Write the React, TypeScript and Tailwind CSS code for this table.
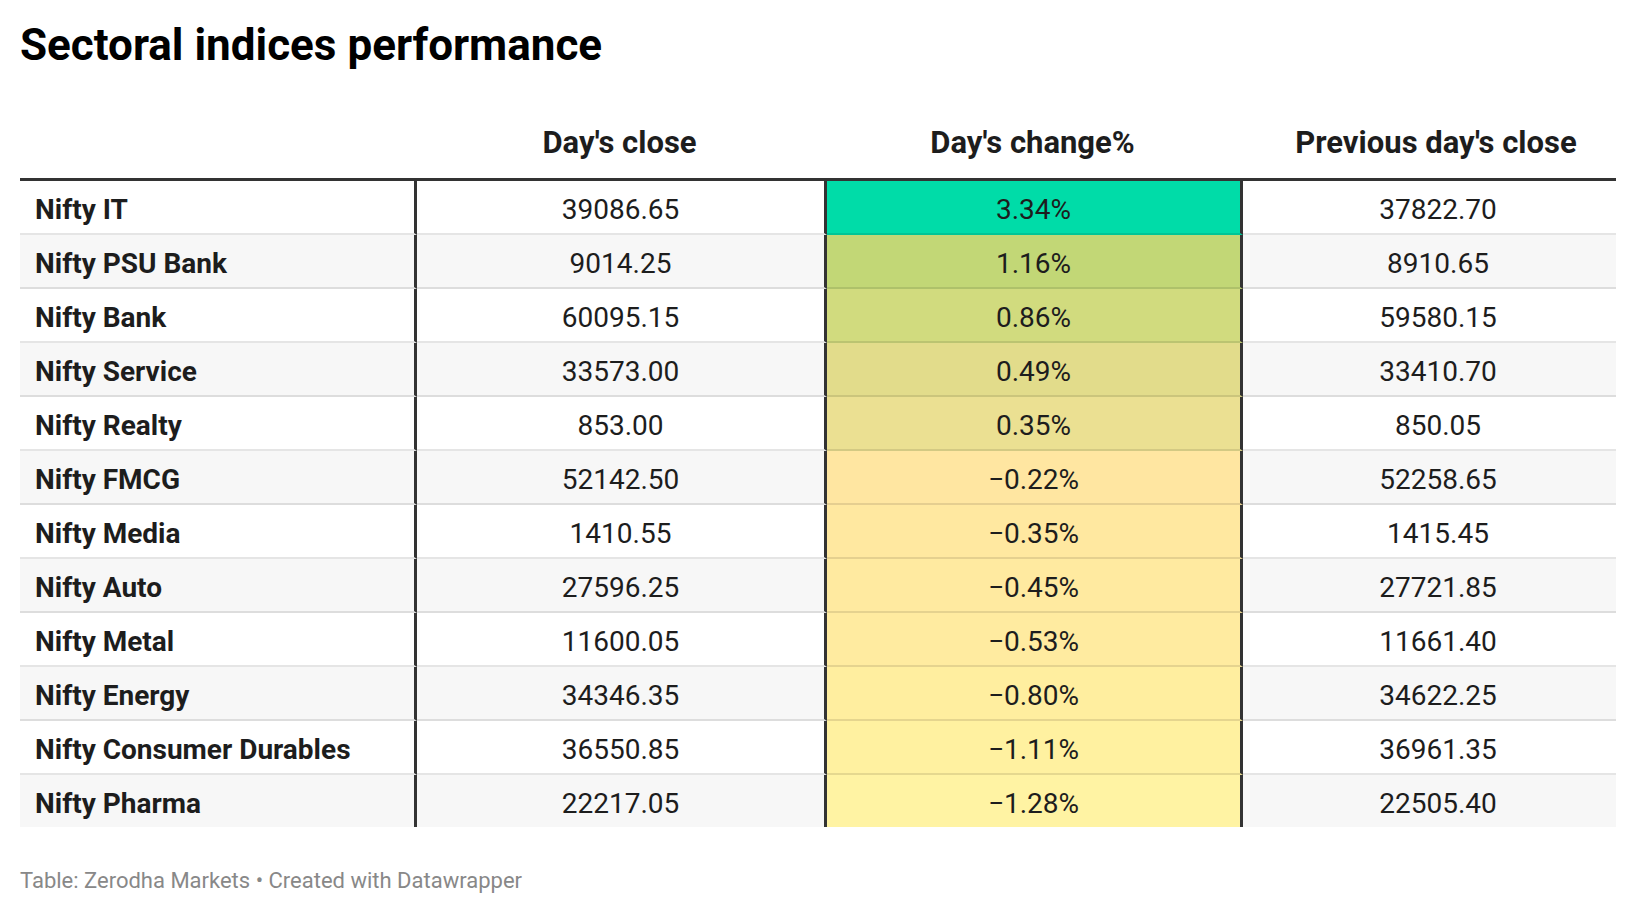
type Row = {
  name: string;
  close: string;
  change: string;
  prev: string;
  color: string;
};

const rows: Row[] = [
  { name: "Nifty IT", close: "39086.65", change: "3.34%", prev: "37822.70", color: "bg-[#00dca8]" },
  { name: "Nifty PSU Bank", close: "9014.25", change: "1.16%", prev: "8910.65", color: "bg-[#c2d776]" },
  { name: "Nifty Bank", close: "60095.15", change: "0.86%", prev: "59580.15", color: "bg-[#d1db7e]" },
  { name: "Nifty Service", close: "33573.00", change: "0.49%", prev: "33410.70", color: "bg-[#e2dc8b]" },
  { name: "Nifty Realty", close: "853.00", change: "0.35%", prev: "850.05", color: "bg-[#ebe092]" },
  { name: "Nifty FMCG", close: "52142.50", change: "\u22120.22%", prev: "52258.65", color: "bg-[#ffe6a1]" },
  { name: "Nifty Media", close: "1410.55", change: "\u22120.35%", prev: "1415.45", color: "bg-[#ffe8a0]" },
  { name: "Nifty Auto", close: "27596.25", change: "\u22120.45%", prev: "27721.85", color: "bg-[#ffeaa0]" },
  { name: "Nifty Metal", close: "11600.05", change: "\u22120.53%", prev: "11661.40", color: "bg-[#ffeba0]" },
  { name: "Nifty Energy", close: "34346.35", change: "\u22120.80%", prev: "34622.25", color: "bg-[#ffee9f]" },
  { name: "Nifty Consumer Durables", close: "36550.85", change: "\u22121.11%", prev: "36961.35", color: "bg-[#fff1a0]" },
  { name: "Nifty Pharma", close: "22217.05", change: "\u22121.28%", prev: "22505.40", color: "bg-[#fff3a3]" },
];

export default function App() {
  return (
    <div className="min-h-screen bg-white px-5 font-['Roboto',sans-serif] text-[#1d1d1d]">
      <h1 className="pt-[18px] text-[44px] font-bold leading-[54px] text-black">
        Sectoral indices performance
      </h1>

      <div className="mt-[54px] grid grid-cols-[397px_410px_416px_373px] text-[28px]">
        {/* header */}
        <div className="border-b-[3px] border-[#333]" />
        <div className="border-b-[3px] border-[#333] pr-[5px] pb-[18px] text-center text-[31px] font-bold leading-[34px]">
          Day's close
        </div>
        <div className="border-b-[3px] border-[#333] pr-[5px] pb-[18px] text-center text-[31px] font-bold leading-[34px]">
          Day's change%
        </div>
        <div className="border-b-[3px] border-[#333] pl-[13px] pb-[18px] text-center text-[31px] font-bold leading-[34px]">
          Previous day's close
        </div>

        {rows.map((r, i) => {
          const stripe = i % 2 === 1 ? "bg-[#f7f7f7]" : "bg-white";
          const line = i < rows.length - 1 ? "border-b-2 border-b-black/10" : "";
          return (
            <div key={r.name} className="contents">
              <div className={`${stripe} ${line} border-r-[3px] border-r-[#333] pt-[6px] pl-[15px] font-bold leading-[46px]`}>
                {r.name}
              </div>
              <div className={`${stripe} ${line} border-r-[3px] border-r-[#333] pt-[6px] text-center leading-[46px]`}>
                {r.close}
              </div>
              <div className={`${r.color} ${line} border-r-[3px] border-r-[#333] pt-[6px] text-center leading-[46px]`}>
                {r.change}
              </div>
              <div className={`${stripe} ${line} pt-[6px] pl-[17px] text-center leading-[46px]`}>{r.prev}</div>
            </div>
          );
        })}
      </div>

      <p className="mt-[40px] text-[22px] leading-[28px] text-[#888]">
        Table: Zerodha Markets • Created with Datawrapper
      </p>
    </div>
  );
}
